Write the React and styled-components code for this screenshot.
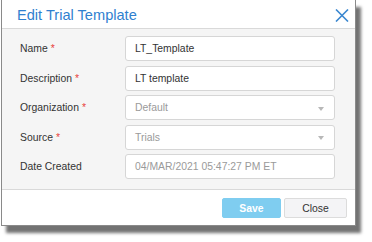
import styled, { createGlobalStyle } from 'styled-components';

const Global = createGlobalStyle`
body {
    margin: 0;
    background: #ffffff;
    font-family: 'Liberation Sans', Arial, sans-serif;
}
`

const fields = [
    { label: 'Name', required: true, value: 'LT_Template' },
    { label: 'Description', required: true, value: 'LT template' },
    { label: 'Organization', required: true, value: 'Default', select: true, disabled: true },
    { label: 'Source', required: true, value: 'Trials', select: true, disabled: true },
    { label: 'Date Created', value: '04/MAR/2021 05:47:27 PM ET', disabled: true },
]

function App() {
    return (
        <Page>
            <Global />
            <Dialog>
                <Header>
                    <Title>Edit Trial Template</Title>
                    <CloseIcon width="14" height="13" viewBox="0 0 14 13">
                        <path d="M1 0.5 L13 12.5 M13 0.5 L1 12.5" stroke="#3a87d0" strokeWidth="1.6" fill="none" />
                    </CloseIcon>
                </Header>
                <Body>
                    {fields.map((f) => (
                        <Row key={f.label}>
                            <Label>
                                {f.label}
                                {f.required && <Star>*</Star>}
                            </Label>
                            <Field $disabled={f.disabled}>
                                <span>{f.value}</span>
                                {f.select && <Caret />}
                            </Field>
                        </Row>
                    ))}
                </Body>
                <Footer>
                    <SaveButton>Save</SaveButton>
                    <Button>Close</Button>
                </Footer>
            </Dialog>
        </Page>
    )
}

export default App;

const Page = styled.div`
width: 372px;
height: 242px;
padding-left: 1px;
box-sizing: border-box;
overflow: hidden;
`

const Dialog = styled.div`
width: 355px;
box-sizing: border-box;
border: 1px solid #8a8a8a;
border-top: none;
background: #ffffff;
box-shadow: 5px 7px 3px rgba(0, 0, 0, 0.55);
`

const Header = styled.div`
height: 28px;
display: flex;
justify-content: space-between;
align-items: center;
padding-left: 15px;
padding-right: 6px;
border-bottom: 1px solid #d9d9d9;
`

const Title = styled.h1`
margin: 0;
margin-top: 2px;
font-size: 14.6px;
font-weight: 400;
color: #2f7fcf;
`

const CloseIcon = styled.svg`
display: block;
margin-top: 2px;
`

const Body = styled.div`
background: #f5f5f5;
padding: 7px 20px 10px 18px;
display: flex;
flex-direction: column;
gap: 4.5px;
border-bottom: 1px solid #d9d9d9;
`

const Row = styled.div`
display: grid;
grid-template-columns: 105px 1fr;
align-items: center;
`

const Label = styled.div`
font-size: 10.4px;
color: #333333;
`

const Star = styled.span`
color: #e8403a;
margin-left: 3px;
`

const Field = styled.div`
height: 25px;
box-sizing: border-box;
display: flex;
justify-content: space-between;
align-items: center;
padding: 0 10px 0 9px;
background: #ffffff;
border: 1px solid #d6d6d6;
border-radius: 3px;
font-size: 10.4px;
color: ${(p) => (p.$disabled ? '#9a9a9a' : '#333333')};
`

const Caret = styled.i`
width: 0;
height: 0;
border-left: 3px solid transparent;
border-right: 3px solid transparent;
border-top: 4px solid #b8b8b8;
margin-top: 2px;
`

const Footer = styled.div`
display: flex;
justify-content: flex-end;
gap: 3px;
padding: 8px 8px 7px 0;
`

const Button = styled.div`
width: 63px;
height: 20px;
box-sizing: border-box;
display: flex;
justify-content: center;
align-items: center;
border: 1px solid #dcdcdc;
border-radius: 2px;
background: #f4f4f6;
font-size: 10.4px;
color: #333333;
`

const SaveButton = styled(Button)`
width: 59px;
border-color: #7fcdf0;
background: #7fcdf0;
color: #ffffff;
font-weight: 700;
`
